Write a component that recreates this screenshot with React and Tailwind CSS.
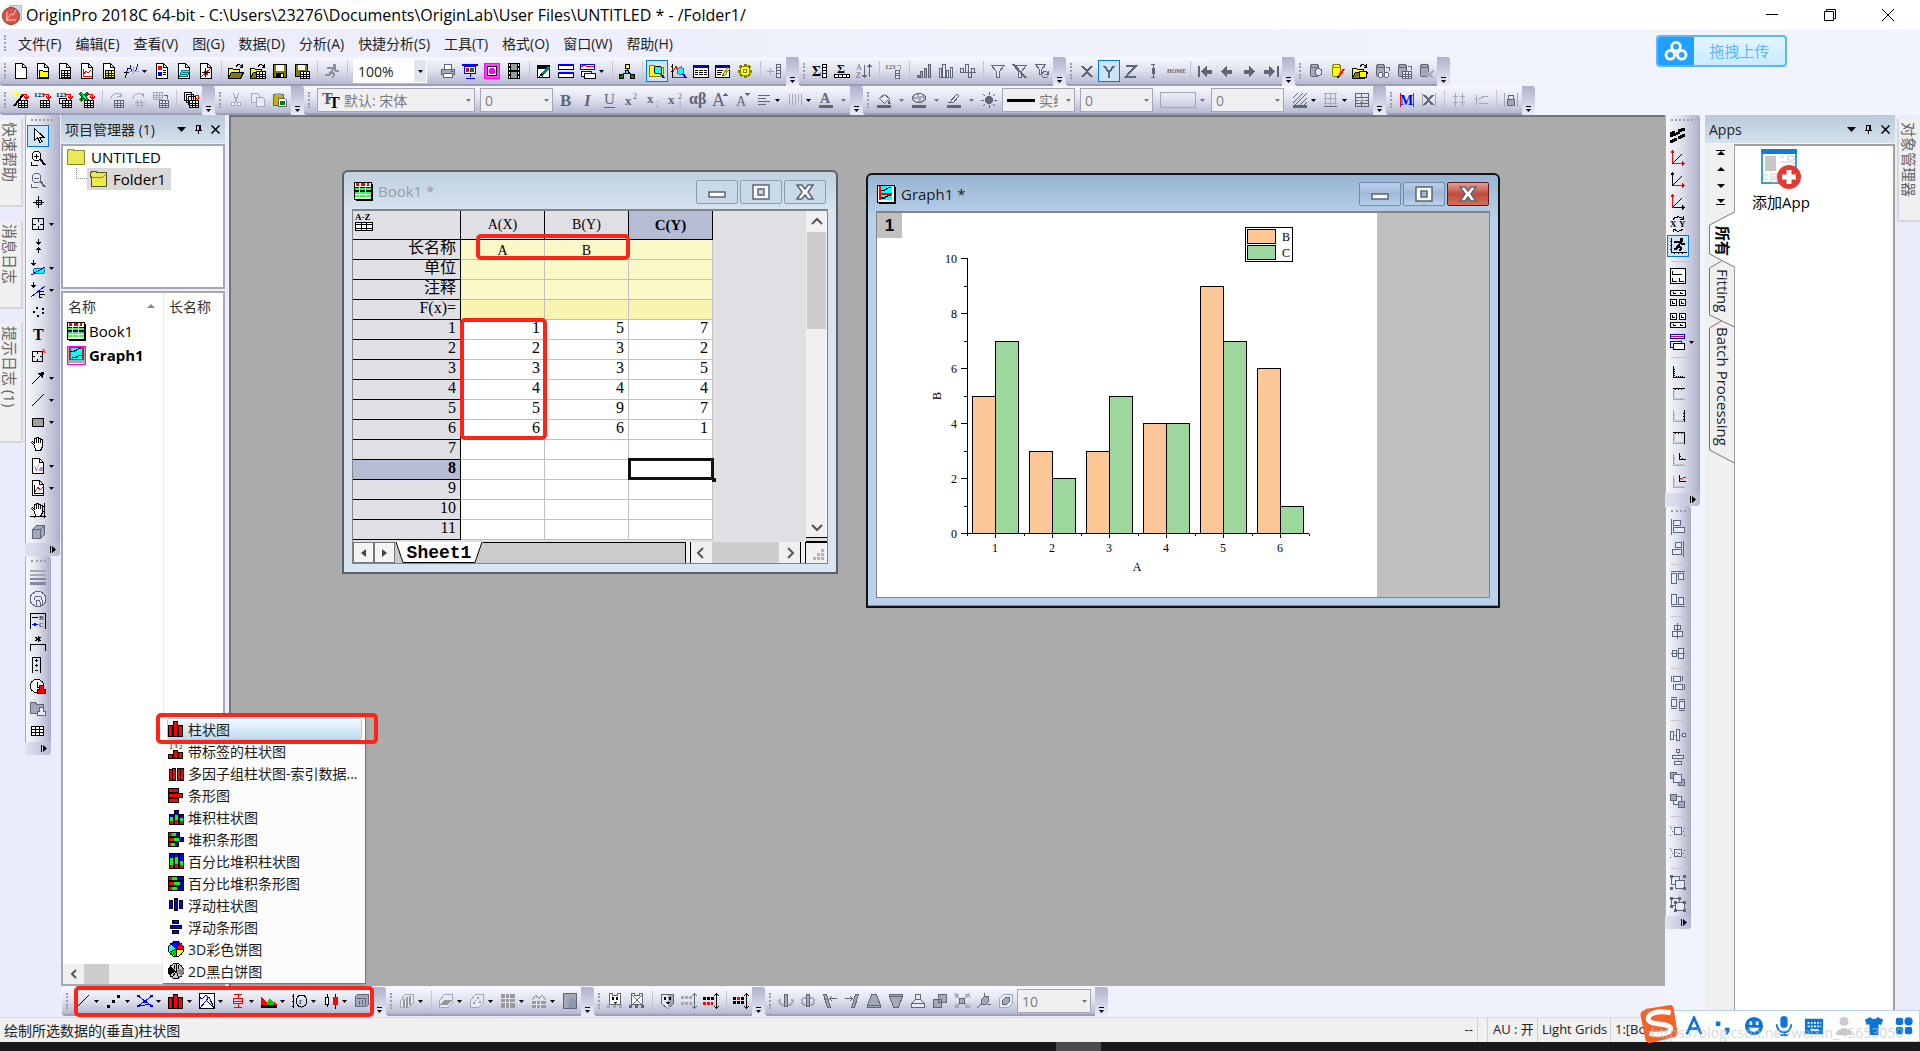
import React from "react";

/* ---------- drawing helpers for the 16x16 tool icons ---------- */
const K = "#000", G = "#5f6675", L = "#a3a9b8", W = "#fff", Y = "#ff0", O = "#808000", R = "#f00", B = "#00f", C = "#0ff", N = "#008000", P = "#e4eafa";
const s = (d, c = K, w = 1) => ({ d, stroke: c, fill: "none", strokeWidth: w });
const f = (d, c = K) => ({ d, fill: c });
const b = (d, c = W, k = K) => ({ d, fill: c, stroke: k });
const t = (x, y, txt, size, c = K, weight = 400) => ({ txt, x, y, size, c, weight });
const r = (x, y, w, h) => `M${x} ${y}h${w}v${h}h-${w}z`;
const o = (x, y, w, h) => `M${x + 0.5} ${y + 0.5}h${w - 1}v${h - 1}h-${w - 1}z`;
const rs = (...list) => list.map((a) => r(...a)).join("");
const os = (...list) => list.map((a) => o(...a)).join("");

const page = [b("M2.5.5h7l4 4v11h-11z"), s("M9.5.5v4h4")];
const grid = (x, y, c = W, k = K) => [b(o(x, y, 10, 8), c, k), s(`M${x} ${y + 3}.5h10M${x} ${y + 5}.5h10M${x + 3}.5 ${y}v8M${x + 6}.5 ${y}v8`, k)];
const folder = [b("M.5 5.5h4l1 1h6v3h4l-3 6h-12z", O), b("M.5 5.5h4l1 1h6v3h-8l-3 5z", Y), s("M8 3.5c2-3 4-2 6 0M14.5 1v3h-3")];
const cyl = (c, k) => [b("M2.5 3.5c0-3 8-3 8 0v8c0 3-8 3-8 0z", c, k), s("M2.5 3.5c0 2 8 2 8 0", k)];
const import1 = (top, c = K, a = R) => [...top, ...grid(5, 8, W, c), s("M8 2.5h5.500v4M11 4.500l2.500 2.500 2.500-2.500", a)];
const axes = (a, c) => [s("M2.500 1v12.500M.500 3.500l2-2.500 2 2.500", a), s("M2.500 13.500h12M12 11.500l2.500 2-2.500 2", c), s("M3 13L12 4", K)];
const cube = (k = G, c = L) => [b("M2.500 5.500l4-4h8v9l-4 4h-8z", c, k), s("M2.500 5.500h8v9M10.500 5.500l4-4", k)];
const tick = "M3.500 2v11.500h11M4 5.500h1M4 7.500h1M4 9.500h1M4 11.500h1M6.500 13v-1M8.500 13v-1M10.500 13v-1M12.500 13v-1";
const runner = (c) => [f("M9 1h3v3h-3z", c), s("M3 5.500l3-1 4 .5-3 4 3 2-1 4M7 9l-2 3h-4M10 5l2 3h3", c, 2)];
const hand = [b("M4.500 9.500l-3-3 1-1 2 1.500v-5h2v-1h2v1h2v1.500h2v7l-2 4h-5z"), s("M6.500 2v5M8.500 2v5M10.500 3v4")];

const ICONS = {
  new: page,
  "new folder": [...page, b("M4.500 7.500h3l1 1h5v6h-9z", Y)],
  "new workbook": [...page, ...grid(4, 7)],
  "new graph": [...page, s("M4.500 6v7.500h8", R), s("M5 11l2-3 2 2 3-3", R)],
  "new matrix": [...page, ...grid(4, 7, Y)],
  "new function": [s("M7 5h-2l-3 10M1 9.500h5"), s("M7 2c2 10 5 10 8-1", B), s("M6 8.500h10M10.500 3v8", L)],
  "new layout": [...page, f(rs([4, 3, 4, 4], [4, 9, 4, 4]), R), f(r(4, 9, 4, 4), B), s("M9 7.500h3M9 9.500h3M9 11.500h3")],
  "new notes": [...page, b("M5.500 7.500h8l-2 6h-8z", C, "#008080"), s("M6 9.500h6M5 11.500h6", "#008080")],
  "new excel": [...page, s("M3 14L13 5", R), f(r(6, 8, 4, 4), R), s("M7.500 5v9M4 9.500h8")],
  open: folder,
  "open template": [...folder.slice(0, 2), ...grid(6, 8), s("M8 3.500c2-3 4-2 6 0M14.500 1v3h-3")],
  save: [b(o(1, 1, 14, 14), O), f(r(4, 2, 8, 6), W), f(r(4, 10, 8, 4)), f(r(9, 11, 2, 3), W)],
  "save template": [b(o(1, 1, 13, 13), O), f(r(4, 2, 7, 5), W), ...grid(6, 8)],
  run: runner("#8a90a0"),
  print: [b("M4.500 1.500h7v5h-7z", W, G), b(o(1, 6, 14, 6), L, G), b(o(3, 10, 10, 5), W, G), f(r(11, 8, 2, 1), N)],
  present: [f(r(0, 1, 16, 2), B), b(o(2, 3, 12, 8), W, B), f(r(4, 5, 3, 4), R), f(r(8, 5, 4, 4), N), s("M8.500 11v3M4 15.500h9", B)],
  slide: [b(o(0, 0, 16, 16), "#ff40ff", "#f0f"), b(o(3, 3, 10, 10)), f("M5 8a3 3 0 1 0 6 0a3 3 0 1 0-6 0", "#f0f")],
  film: [f(r(2, 0, 12, 16)), f(rs([5, 1, 6, 6], [5, 9, 6, 6]), "#999"), f(rs([3, 1, 1, 2], [3, 5, 1, 2], [3, 9, 1, 2], [3, 13, 1, 2], [12, 1, 1, 2], [12, 5, 1, 2], [12, 9, 1, 2], [12, 13, 1, 2]), W)],
  edit: [b(o(1, 2, 13, 13)), s("M1 4.500h13", K, 3), s("M5 13l8-9", "#008080", 3), f("M3 14l2-4 2 2z")],
  tile: [b(o(0, 1, 16, 6)), f(r(0, 1, 16, 2), B), b(o(0, 9, 16, 6)), f(r(0, 9, 16, 2), B)],
  cascade: [b(o(0, 1, 15, 6), W, B), s("M1 4l3-2 4 2 3-1 3 1", R), b(o(1, 8, 11, 6), W, B), b(o(4, 10, 12, 6)), f(r(4, 10, 12, 1), B)],
  tree: [s("M8 5v3M3.500 12L8 8l5 4"), b(o(6, 1, 5, 5), Y), b(o(0, 11, 5, 5), N), b(o(11, 11, 5, 5), N), b(o(6, 7, 4, 4), C)],
  explorer: [b("M.500 2.500h5l1 2h8v9h-14z", Y, O), b("M5 7a4 4 0 1 0 8 0a4 4 0 1 0-8 0", C, K), s("M11 10l4 5", B, 2)],
  "find graph": [s("M1.500 1v13.500h14M2 9l3-6 2 5 4-5", R), s("M1.500 1v14M0 3.500h2M0 8.500h2"), b("M6 8a3 3 0 1 0 7 0a3 3 0 1 0-7 0", C, G), s("M12 11l3 4", B, 2)],
  results: [b(o(0, 2, 16, 13)), f(r(0, 2, 16, 3), "#00a"), s("M2 7.500h12M2 9.500h12M2 11.500h12"), s("M5.500 6v8M10.500 6v8", W)],
  script: [b(o(0, 2, 15, 13)), f(r(0, 2, 15, 3), "#00a"), s("M2 7.500h6M2 9.500h5M2 11.500h4"), s("M8 13l6-8", O, 3), s("M9 12l5-7", Y, 1)],
  gear: [s("M8 1v14M1 8h14M3 3l10 10M13 3L3 13", O, 3), b("M3 8a5 5 0 1 0 10 0a5 5 0 1 0-10 0", Y, O), b("M6 8a2 2 0 1 0 4 0a2 2 0 1 0-4 0", W, O)],
  "add column": [s("M0 8.500h7M3.500 5v7", L), b(o(9, 1, 5, 14), P, G), s("M9 4.500h5M9 7.500h5M9 10.500h5", G)],
  "column stats": [t(0, 13, "Σ", 14, K, 700), b(o(10, 1, 5, 14)), s("M10 4.500h5M10 7.500h5M10 10.500h5")],
  "row stats": [t(3, 10, "Σ", 12, K, 700), b(o(0, 11, 16, 4)), s("M4.500 11v4M8.500 11v4M12.500 11v4")],
  sort: [t(0, 7, "A", 8, G), t(0, 15, "Z", 8, G), s("M8.500 2v12M6.500 12l2 2 2-2M13.500 14V2M11.500 4l2-2 2 2", G)],
  "set values": [t(-1, 6, "123", 7, G, 700), s("M11 2.500h3v4", L), b(o(9, 7, 5, 9), P, G), s("M9 10.500h5M9 12.500h5", G)],
  ascending: [b(os([1, 12, 3, 3], [4, 8, 3, 7], [8, 5, 3, 10], [12, 1, 3, 14]), L, G)],
  columns: [b(os([1, 5, 3, 10], [4, 1, 4, 14], [8, 7, 3, 8], [12, 4, 3, 11]), P, G)],
  normal: [s("M.500 10V5.500h3V10M5.500 10V1.500h3V14.500h3V5.500h3V9M0 9.500h16", G)],
  filter: [b("M1.500 2.500h13l-5 6v6h-3v-6z", P, G), f("M8 8l5-5h1z", G)],
  "filter off": [b("M1.500 2.500h13l-5 6v6h-3v-6z", P, G), s("M1 1l13 14", G, 2)],
  "filter redo": [b("M1.500 1.500h10l-4 5v5h-2v-5z", P, G), s("M8 10.500c2-3 5-3 6 0M14 8v3h-3M14 13c-2 3-5 2-6-1", G)],
  X: [s("M3 3l10 11M13 3L3 14", G, 2)],
  Y: [s("M3 3l5 6 5-6M8 9v6", G, 2)],
  Z: [s("M3 3h10L3 13.500h10", G, 2)],
  error: [s("M6 1.500h4M6 14.500h4M8.500 2v12", G), f(r(7, 5, 3, 6), G)],
  home: [t(0, 10, "HOME", 6, G, 700)],
  first: [s("M1.500 3v11", G, 2), f("M4 8.500L10 3v3.500h5v4h-5V14z", G)],
  previous: [f("M2 8.500L8 3v3.500h5v4H8V14z", G)],
  next: [f("M14 8.500L8 3v3.500H3v4h5V14z", G)],
  last: [f("M12 8.500L6 3v3.500H1v4h5V14z", G), s("M14.500 3v11", G, 2)],
  "db search": [...cyl(L, G), b("M7 9a3 3 0 1 0 7 0a3 3 0 1 0-7 0", P, G)],
  "db edit": [...cyl(Y, O), s("M8 14l6-8", R, 2), f(r(7, 13, 2, 2))],
  "db open": [...folder.slice(0, 2), b("M7.500 9.500c0-2 7-2 7 0v4c0 2-7 2-7 0z", Y), s("M8 3.500c2-3 4-2 6 0M14.500 1v3h-3")],
  "db preview": [...cyl(L, G), s("M12 4h3v4", G), b("M4 12a2 2 0 1 0 5 0a2 2 0 1 0-5 0M10 12a2 2 0 1 0 5 0a2 2 0 1 0-5 0", W, G)],
  "db import": [...cyl(L, G), s("M12 3h3v4", G), ...grid(6, 8, P, G)],
  "db remove": [...cyl(L, G), s("M8 8l7 7M15 8l-7 7", L, 2)],
  wizard: import1([s("M1 14L10 3", K, 2), s("M0 2l4 2M3 0v4M7 0L5 3", Y)]),
  "import single": import1([t(-1, 5, "123", 7, K, 700)]),
  "import multiple": import1([t(-1, 5, "123", 7, K, 700), b(o(2, 6, 8, 6))]),
  "import excel": import1([s("M1 1l8 8M9 1L1 9", N, 3), s("M2 1l7 8", C)]),
  reimport: [...grid(5, 8, P, G), s("M2 6.500c0-5 8-6 10-3M12 1v4M8 4.500h4", L, 1)],
  resample: [s("M4 10.500h10M4 13.500h10M6.500 8v8M10.500 8v8M2 6.500c0-5 8-6 10-3M12 1v4", L)],
  transfer: [...grid(0, 0, P, L), ...grid(6, 8, P, G), s("M11 3h3v4", G)],
  batch: [b(os([1, 0, 8, 9], [3, 2, 8, 9], [5, 4, 8, 9])), ...grid(6, 8), s("M12 3h3v4M13 6l2 2", R)],
  cut: [s("M5 1l4 9M11 1L7 10", L), b("M3 12a2 2 0 1 0 4 0a2 2 0 1 0-4 0M9 12a2 2 0 1 0 4 0a2 2 0 1 0-4 0", W, L)],
  copy: [b("M1.500 1.500h6l2 2v7h-8z", P, L), b("M6.500 5.500h6l2 2v7h-8z", P, L)],
  paste: [b(o(1, 2, 11, 12), "#c8b400", G), f(r(4, 1, 5, 3), L), b("M6.500 6.500h6l2 2v6h-8z", W, G), f(r(8, 9, 5, 4), N)],
  bold: [t(2, 14, "B", 17, G, 700)],
  italic: [{ ...t(4, 14, "I", 17, G, 700), italic: true }],
  underline: [t(2, 12, "U", 15, G), s("M2 15.500h11", G)],
  superscript: [t(1, 13, "x", 13, G, 700), t(9, 7, "2", 8, G)],
  subscript: [t(1, 11, "x", 13, G, 700), t(9, 15, "2", 8, L)],
  "super subscript": [t(0, 12, "x", 13, G, 700), t(10, 7, "2", 8, G), t(10, 15, "1", 8, L)],
  greek: [t(-1, 12, "αβ", 16, G, 700)],
  "increase font": [t(0, 14, "A", 18, G), f("M11 4l2.500-3L16 4z", G)],
  "decrease font": [t(2, 14, "A", 14, G), f("M11 1h5l-2.500 3z", G)],
  align: [s("M2 3.500h12M2 6.500h8M2 9.500h12M2 12.500h8", G)],
  vertical: [s("M2.500 2v11M5.500 2v11M8.500 2v11M11.500 2v8M14.500 2v11", L)],
  "font color": [t(2, 11, "A", 14, G, 700), f(r(1, 13, 14, 3), G)],
  fill: [b("M3.500 6.500l5-4 5 4-5 5z", P, G), f("M13 7l2 5h-3z", G), f(r(1, 13, 14, 3), G)],
  palette: [b("M1.500 6c0-6 13-6 13 0s-13 6-13 0", L, G), f(rs([4, 3, 2, 2], [8, 2, 3, 2], [10, 6, 2, 2], [4, 7, 3, 2]), P), f(r(1, 13, 14, 3), G)],
  "line color": [b("M4 10l7-8 2 2-6 7z", P, G), s("M2 10.500h3", G), f(r(1, 13, 14, 3), G)],
  light: [f("M4 8a4 4 0 1 0 8 0a4 4 0 1 0-8 0", G), s("M8 0v3M8 13v3M0 8h3M13 8h3M2 2l2 2M14 2l-2 2M2 14l2-2M14 14l-2-2", G)],
  hatch: [s("M1 6l5-5M1 11L11 1M3 13L15 1M8 13l7-7M12 13l3-3", G), f(r(1, 13, 14, 3), G)],
  borders: [s("M1 1.500h13M1 6.500h13M1 11.500h13M2.500 1v12M7.500 1v12M12.500 1v12", L), s("M1 14.500h13", G)],
  merge: [s(os([1, 1, 14, 14]) + "M1 5.500h14M1 11.500h14M7.500 1v4M7.500 12v3M2 8.500h3M11 8.500h3", G), t(6, 11, "a", 8, G)],
  mask: [s("M1.500 1v14M14.500 1v14", R), t(1, 13, "M", 14, B, 700)],
  unmask: [s("M1.500 1v14M14.500 1v14", L), s("M3 3l9 10M12 3L3 13", G, 2)],
  "move points": [s("M4.500 1v14M11.500 1v14M2 4.500h5M2 10.500h5M9 4.500h5M9 10.500h5", L)],
  "remove points": [s("M3.500 3v10M1 6l3 3 3-3M7 7l4-3 4 1M6 11h9", L)],
  lock: [s("M1.500 1v14M14.500 1v14", L), b(o(4, 7, 8, 7), L, G), s("M5.500 7V4.500c0-2 5-2 5 0V7", G)],

  pointer: [b("M4.500.500v12l3-3 2.500 5 2-1-2.500-4.500h4z")],
  "zoom in": [b("M2 6a4.500 4.500 0 1 0 9 0a4.500 4.500 0 1 0-9 0"), s("M4 6h5M6.500 3.500v5"), s("M10 9l5 6", K, 2), s("M1.500 12v3h6")],
  "zoom out": [b("M2 6a4.500 4.500 0 1 0 9 0a4.500 4.500 0 1 0-9 0", P, G), s("M4 6h5", G), s("M10 9l5 6", G, 2), s("M1.500 12v3h6", G)],
  reader: [s("M8.500 2v12M3 8.500h11" + o(6, 6, 6, 5))],
  "data reader": [s(o(2, 2, 12, 12) + "M8 2v4M8 10v4M2 8h4M10 8h4")],
  "data selector": [s("M8.500 1v5M8.500 10v5"), f("M5 4h7l-3.500 3zM5 12h7l-3.500-3z")],
  region: [s("M3.500 0v5"), f("M0 3h7L3.500 6z"), b("M3 11c0-4 12-4 12 0s-12 4-12 0", C, "#008080"), s("M1 15L15 7", B)],
  "mask points": [s("M3.500 0v5"), f("M0 3h7L3.500 6z"), s("M1 15L15 4", B), s("M8 9.500h6M9.500 9v6M10 12.500h5M9 15.500h3")],
  "draw data": [f(rs([6, 3, 2, 2], [3, 7, 2, 2], [12, 4, 2, 2], [12, 8, 2, 2], [7, 11, 2, 2]))],
  text: [t(3, 14, "T", 16, K, 700)],
  annotation: [s(o(2, 3, 11, 11) + "M7.500 3v3M7.500 11v3M2 8.500h3M10 8.500h3"), t(11, 5, "A", 7, R, 700)],
  arrow: [s("M2 14L12 4"), f("M7 3l7-1-1 7z")],
  line: [s("M2 14L14 2")],
  rectangle: [b(o(2, 4, 12, 9), "#a0a0a0")],
  pan: hand,
  equation: [...page, t(4, 13, "√a", 9, "#800080")],
  "insert graph": [...page, s("M4.500 5v8.500h9M6.500 13v1M8.500 13v1"), s("M5 12l3-5 2 3 3-3", R)],
  rescale: [...hand.slice(0, 2), s("M0 14.500h16M14.500 1v15M4.500 14v2M12 4.500h3M12 9.500h3")],
  "3d rotate": cube(),
  lines: [f(rs([0, 1, 16, 2], [0, 5, 16, 2]), L), f(rs([0, 9, 16, 2], [0, 13, 16, 3]), "#8289a0")],
  contour: [b("M0 8a8 7.500 0 1 0 16 0a8 7.500 0 1 0-16 0", P, G), s("M4 9a4 4 0 1 1 8 0v5M6 15v-4a2 2 0 1 1 4 0v4", G)],
  legend: [s("M.500 16V.500h15V16"), s("M2 4.500h6"), t(9, 7, "B", 7), t(9, 14, "C", 7), s("M2 11.500h6", B), f(r(4, 10, 2, 3), B)],
  "x scale": [s("M.500 16v-6.500h15V16M8 1v6M5 2l6 4M11 2L5 6")],
  "color scale": [s("M2.500 16V.500h8V16M5 3.500h3M5 8.500h3M5 13.500h3M6.500 2v3M6.500 7v3")],
  timestamp: [b("M0 7a7 6.500 0 1 0 14 0a7 6.500 0 1 0-14 0"), s("M7 3v5h3"), b("M9.500 6.500h4v4h2v4h-8v-4h2z", R)],
  "project stamp": [b("M.500 1.500h5l1 2h7v9h-13z", L, G), b("M9.500 6.500h4v4h2v4h-8v-4h2z", P, G)],
  table: [b(o(1, 3, 13, 10)), s("M1 6.500h13M1 9.500h13M5.500 3v10M9.500 3v10")],

  layers: [s("M8 3l7-2M4 7l6-3M8 10l7-3M0 8l6-2M0 14l7-3M0 6l5-2", K, 3)],
  "axes both": axes(R, R),
  "axes x": axes(K, R),
  "axes y": axes(R, K),
  "exchange xy": [t(0, 11, "X", 9, K, 700), t(9, 11, "Y", 9, K, 700), s("M3 4c2-4 8-4 10-1M13 0v3h-3M13 13c-3 3-7 3-9 0M3 16v-3h3")],
  "speed mode": [s("M1.500 0v14.500h15M0 3.500h2M0 7.500h2M0 11.500h2M4.500 14v2M8.500 14v2M12.500 14v2"), f("M10 0h3v3h-3z"), s("M4 4.500l3-1 4 .5-3 4 3 2-1 3M8 8l-2 3h-2M11 4l1 2h3", K, 2)],
  "layers one": [b(o(0, 0, 16, 16)), s("M2.500 3v3.500h9M2.500 10v3.500h4M9.500 10v3.500h4")],
  "layers merge": [b(os([0, 0, 16, 6], [0, 9, 7, 7], [9, 9, 7, 7])), s("M3.500 2v1.500h2M10.500 2v1.500h2M2.500 11v2.500h2M11.500 11v2.500h2")],
  "layers extract": [b(os([0, 1, 7, 7], [9, 1, 7, 7], [0, 10, 16, 6])), s("M2.500 3v2.500h2M11.500 3v2.500h2M3.500 12v1.500h2M10.500 12v1.500h2")],
  "layers arrange": [b(o(0, 0, 15, 5), W, B), s("M1 3l3-1 4 1 3-1 3 1", R), b(o(0, 7, 12, 7), W, B), b(o(3, 9, 12, 7))],
  "add bottom left": [s(tick)],
  "add top": [s(tick, L), s("M3 2.500h12M5.500 3v1M8.500 3v1M11.500 3v1")],
  "add right": [s(tick, L), s("M14.500 2v12M13 5.500h1M13 8.500h1M13 11.500h1")],
  "add top right": [s(tick, L), s("M3 2.500h11.500V14M5.500 3v1M8.500 3v1M11.500 3v1")],
  "add inset": [s(tick, L), s("M9.500 1v6.500h6M10 4.500h1M12.500 7V6")],
  "add inset data": [s(tick, L), s("M9.500 1v6.500h6M10 4.500h1"), s("M11 6l3-3 2 1", R)],

  "align left": [s("M1.500 0v16", G), b(os([3, 1, 8, 6], [3, 8, 12, 6]), P, G)],
  "align right": [s("M13.500 0v16", G), b(os([5, 1, 7, 6], [2, 8, 10, 6]), P, G)],
  "align top": [s("M1 .500h14", G), b(os([1, 2, 6, 11], [8, 2, 6, 7]), P, G)],
  "align bottom": [s("M1 13.500h14", G), b(os([1, 1, 6, 11], [8, 4, 6, 8]), P, G)],
  "align center": [b(os([4, 2, 7, 5], [2, 8, 11, 6]), P, G), s("M7.500 0v16", G)],
  "align middle": [b(os([2, 5, 5, 7], [8, 3, 6, 11]), P, G), s("M1 8.500h14", G)],
  "same width": [b(os([3, 1, 8, 6], [5, 9, 8, 6]), P, G), s("M1.500 1v6M12.500 1v5M3.500 9v6M14.500 9v6", G)],
  "same height": [b(os([1, 2, 6, 8], [9, 4, 6, 8]), P, G), s("M1 .500h6M1 11.500h6M9 2.500h6M9 13.500h6", G)],
  "distribute h": [s("M0 8.500h16", L), b(os([0, 4, 4, 9], [6, 2, 4, 12], [12, 6, 4, 4]), P, G)],
  "distribute v": [s("M8 0v16", L), b(os([6, 0, 4, 4], [2, 6, 12, 4], [4, 12, 8, 4]), P, G)],
  front: [b(os([0, 1, 7, 7], [8, 8, 7, 7]), L, G), b(o(3, 3, 9, 9), P, G)],
  back: [b(o(3, 3, 9, 9), P, G), b(os([0, 1, 7, 7], [8, 8, 7, 7]), L, G)],
  "to front": [b(o(4, 4, 8, 8), P, G), f(rs([0, 3, 1, 1], [1, 5, 1, 1], [2, 8, 1, 1], [0, 12, 1, 1], [14, 5, 1, 1], [13, 8, 1, 1], [14, 12, 1, 1]), G)],
  "to back": [b(o(4, 4, 8, 8), P, G), f(rs([0, 3, 1, 1], [1, 5, 1, 1], [2, 8, 1, 1], [0, 12, 1, 1], [14, 5, 1, 1], [13, 8, 1, 1], [14, 12, 1, 1], [6, 7, 1, 1], [8, 8, 2, 1], [7, 10, 1, 1]), G)],
  group: [b(o(1, 1, 9, 9), P, G), b(o(5, 5, 10, 9), P, G), f(rs([0, 0, 3, 3], [13, 0, 3, 3], [0, 12, 3, 3], [13, 12, 3, 3]), G)],
  ungroup: [b(o(1, 1, 9, 8), P, G), b(o(5, 5, 10, 9), P, G), f(rs([0, 0, 3, 3], [8, 0, 3, 3], [0, 8, 3, 3], [4, 4, 3, 3], [13, 4, 3, 3], [4, 12, 3, 3], [13, 12, 3, 3]), G)],

  "plot line": [s("M2 14L14 2")],
  "plot scatter": [f(rs([1, 12, 3, 3], [6, 7, 3, 3], [11, 2, 3, 3]))],
  "plot line symbol": [s("M1 13L15 3M1 3l7 5 7 5M3 13l10-2", B), f(rs([0, 2, 3, 2], [0, 12, 3, 2], [6, 7, 3, 3], [13, 2, 3, 2], [13, 12, 3, 2]), B)],
  "plot column": [b(os([0, 4, 5, 12], [5, 1, 5, 15], [10, 4, 5, 12]), R)],
  "plot area": [b(o(0, 0, 16, 16), W), s("M1 15L7 8l3-4 5 11", B), s("M1 4c3 6 6-8 8 2", B), s("M8 8l7 7")],
  "plot box": [s("M4 1.500h8M4 14.500h8M8 2v3M8 11v3M3.500 5.500h9v5h-9zM3 8h10", R)],
  "plot fill": [f("M0 15V4l6 6 4-3 6 4v4z", R), f("M5 11l4-6 4 5v2H6z", "#0c0"), f("M0 15v-3h16v3z")],
  "plot polar": [s("M1.500 1v14M0 3.500h2M0 8.500h2M0 13.500h2"), s("M4 8a5.500 6 0 1 0 11 0a5.500 6 0 1 0-11 0"), t(7, 11, "r", 9)],
  "plot stock": [s("M4 1v13M12.500 1v15"), b(o(2, 4, 4, 8)), b(o(10, 4, 5, 8), R, R)],
  "plot template": [b("M1.500 3.500l2-2h11v10l-2 2h-11z", L, G), s("M3 5.500h8v6M5.500 8v4M8.500 7v5", G)],
  "3d bars": [b("M1.500 7.500l5-6h8v8l-5 5h-8z", P, L), s("M4.500 6v8M7.500 4v10M10.500 3v9", "#999", 2)],
  "3d surface": [b("M1.500 7.500l5-6h8v8l-5 5h-8z", P, L), f("M2 12l4-5h8l-4 5z", "#999")],
  "3d scatter": [b("M1.500 7.500l5-6h8v8l-5 5h-8z", P, L), f(rs([4, 9, 2, 2], [8, 4, 2, 2], [10, 8, 2, 2], [6, 7, 1, 1]), "#999")],
  heatmap: [f(r(1, 1, 14, 14), "#999"), s("M1 5.500h14M1 9.500h14M5.500 1v14M9.500 1v14", P)],
  profile: [f(r(1, 8, 14, 7), "#999"), s("M1 7l4-5 3 4 3-4 4 5", "#999"), s("M1 11.500h14M5.500 8v7M9.500 8v7", P)],
  image: [b(o(1, 0, 14, 16), L, G), f("M8 4l6 3v8H6z", "#8c97b0")],
  "mask range": [b("M2.500.500h3v2h5v-2h3v11h-11z", W, G), f("M5 4h2v3h-2zM9 4h2v3h-2zM6 9h4l-2 2z"), f(rs([0, 12, 3, 3], [6, 12, 3, 3], [12, 12, 3, 3]), L)],
  "unmask range": [b("M2.500.500h3v2h5v-2h3v11h-11z", W, G), s("M2 1l12 12M14 1L2 13", G), f(rs([0, 12, 3, 3], [6, 12, 3, 3], [12, 12, 3, 3]), G)],
  "mask color": [b("M2.500 1.500h12v9l-6 5-6-5z", P, G), f("M9 2h5v8l-5 5z", L), f("M5 4h2v3h-2zM10 4h2v3h-2zM6 9h5l-2 3z", K)],
  "hide masked": [f(rs([0, 3, 3, 3], [4, 3, 3, 3], [8, 3, 3, 3], [0, 9, 3, 3], [4, 9, 3, 3], [8, 9, 3, 3]), L), s("M13.500 1v14M11 3l2.500-2.500L16 3M11 13l2.500 2.500L16 13", G)],
  "swap mask": [f(rs([0, 4, 3, 3], [4, 4, 3, 3], [8, 4, 3, 3])), f(rs([0, 9, 3, 3], [4, 9, 3, 3], [8, 9, 2, 3]), R), s("M13.500 1v14M11 3l2.500-2.500L16 3M11 13l2.500 2.500L16 13")],
  "toggle mask": [f(rs([0, 8, 3, 3], [4, 8, 3, 3], [8, 8, 3, 3], [0, 4, 3, 3], [8, 4, 3, 3])), f(r(4, 4, 3, 3), R), s("M13.500 1v14M11 3l2.500-2.500L16 3M11 13l2.500 2.500L16 13")],
  "rotate ccw": [b(o(6, 1, 4, 13), L, G), s("M2 6c-2 4 1 6 4 6M14 6c2 4-1 6-4 6", L, 2)],
  "rotate cw": [b(o(6, 1, 4, 13), L, G), s("M6 12c-7 0-5-8 0-7M10 12c7 0 5-8 0-7", L, 2)],
  "tilt left": [b("M1.500 1.500h3l4 13h-3z", L, G), s("M8 5.500h7M10 3L8 5.500 10 8", G)],
  "tilt right": [b("M14.500 1.500h-3l-4 13h3z", L, G), s("M8 5.500H1M6 3l2 2.500L6 8", G)],
  "tilt down": [b("M5.500 1.500h5l4 11v2h-13v-2z", L, G), s("M1 12.500h14", G)],
  "tilt up": [b("M5.500 14.500h5l4-11v-2h-13v2z", L, G), s("M1 3.500h14", G)],
  perspective: [b("M5.500 6.500h5l4 4v4h-13v-4z", P, G), s("M1 10.500h14M5.500 6V1.500h5V6", G)],
  orthographic: [b(os([6, 1, 9, 9], [1, 6, 9, 9]), L, G)],
  "fit frame": [s("M1 1l4 4M15 1l-4 4M1 15l4-4M15 15l-4-4", L, 2), b(o(5, 5, 6, 6), L, G), s("M1 5V1.500h4M11 1.500h4V5M15 11v3.500h-4M5 14.500H1V11", L)],
  "reset angle": [b("M5.500 6.500l3-3h4v5l-3 3h-4z", L, G), s("M8 0v4M11 11h4M5 11l-4 4", G)],
  "reset rotation": [b("M1.500 5.500l4-4h9v9l-4 4h-9z", P, L), b("M4.500 7.500l3-3h4v4l-3 3h-4z", L, G)],

  "menu column": [b(os([0, 4, 5, 12], [5, 0, 5, 16], [10, 4, 5, 12]), R)],
  "menu labelled": [t(1, 6, "1", 8), t(6, 5, "3", 7), t(11, 6, "2", 7), b(os([0, 11, 5, 5], [5, 7, 5, 9], [10, 9, 5, 7]), R)],
  "menu grouped": [b(os([1, 4, 4, 12], [4, 3, 4, 13], [9, 3, 4, 13], [12, 3, 4, 13]), R)],
  "menu bar": [b(os([0, 1, 11, 5], [0, 6, 15, 5], [0, 11, 11, 5]), R)],
  "menu stacked column": [b(os([1, 5, 5, 11], [6, 1, 5, 15], [11, 5, 5, 11]), B), f(rs([2, 8, 3, 4], [7, 6, 3, 5], [12, 9, 3, 3]), "#0f0"), f(rs([2, 12, 3, 3], [7, 11, 3, 4], [12, 12, 3, 3]), R)],
  "menu stacked bar": [b(os([0, 1, 12, 5], [0, 6, 16, 5], [0, 11, 11, 5]), B), f(rs([4, 2, 4, 3], [6, 7, 5, 3], [3, 12, 4, 3]), "#0f0"), f(rs([1, 2, 3, 3], [1, 7, 5, 3], [1, 12, 2, 3]), R)],
  "menu percent column": [b(os([1, 0, 5, 16], [6, 0, 5, 16], [11, 0, 5, 16]), B), f(rs([2, 5, 3, 7], [7, 4, 3, 7], [12, 8, 3, 4]), "#0f0"), f(rs([2, 12, 3, 3], [7, 11, 3, 4], [12, 12, 3, 3]), R)],
  "menu percent bar": [b(os([0, 1, 16, 5], [0, 6, 16, 5], [0, 11, 16, 5]), B), f(rs([4, 2, 5, 3], [6, 7, 6, 3], [4, 12, 5, 3]), "#0f0"), f(rs([1, 2, 3, 3], [1, 7, 5, 3], [1, 12, 3, 3]), R)],
  "menu floating column": [b(os([1, 3, 4, 9], [6, 1, 4, 13], [11, 3, 4, 9]), B)],
  "menu floating bar": [b(os([4, 1, 7, 4], [2, 6, 12, 4], [4, 11, 7, 4]), B)],
  "menu 3d pie": [b("M.500 8a7.500 7.500 0 1 0 15 0a7.500 7.500 0 1 0-15 0", Y), f("M8 8L3 3a7 7 0 0 1 9-1z", B), f("M8 8L3 3a7 7 0 0 0-1 8z", C), f("M8 8l4-6a7 7 0 0 1 3 6z", R), f("M8 8l-6 3a7 7 0 0 0 6 4z", "#0c0"), s("M8 8L3 3M8 8l4-6M8 8l-6 3M8 8v7M8 8h7")],
  "menu 2d pie": [b("M.500 8a7.500 7.500 0 1 0 15 0a7.500 7.500 0 1 0-15 0", "#ccc"), f("M8 8L2 3a7 7 0 0 0 0 9z"), f("M8 8l6 5a7 7 0 0 0 1-8z", "#888"), s("M8 8l-4 7M8 8l3 7M8 1v7M6 2v4M10 2v4")],

  workbook: [f(r(2, 2, 14, 14)), b(o(0, 0, 15, 15)), f(rs([2, 1, 2, 2], [6, 1, 3, 2], [11, 1, 2, 2]), R), f(rs([1, 5, 13, 2], [1, 8, 13, 2], [1, 11, 13, 2]), "#3f3"), s("M1 4.500h13M1 7.500h13", "#008"), s("M4.500 1v13M9.500 1v13", "#ddd")],
  graph: [f(r(2, 2, 14, 14)), b(o(0, 0, 15, 15)), f(r(2, 1, 11, 12), C), s("M3 5l4-1 3-2h2M3 11h3l3-2h3"), s("M2 7.500h11M2.500 1v12", R)],
  "graph item": [b(o(0, 0, 16, 16), "#aaa", "#f0f"), b(o(2, 1, 12, 11), C, "#933"), s("M3 5l4-1 3-2h2M4 10h3l3-2h3"), s("M2 14.500h12", W)],
  "folder": [b("M.500 2.500l1-1h4l1 1h9v12h-15z", "#e8e85a", "#8a8a30"), f(rs([3, 6, 1, 1], [8, 6, 1, 1], [12, 6, 1, 1], [5, 9, 1, 1], [10, 9, 1, 1]), Y)],
  "folder open": [b("M1.500 2.500l1-1h4l1 1h8v12h-13z", "#e8e85a", "#55551f"), s("M1 6.500h11l3-3", "#8a8a30"), f(rs([4, 9, 1, 1], [8, 9, 1, 1], [6, 12, 1, 1], [11, 12, 1, 1]), Y)],
  "corner": [t(0, 6, "A-Z", 8, K, 700), b(o(0, 8, 16, 8)), s("M0 10.500h16M5.500 8v8M10.500 8v8M0 13.500h16", K)],
};

function Icon({ name, className = "h-4 w-4" }) {
  return (
    <svg viewBox="0 0 16 16" className={`shrink-0 overflow-visible ${className}`} aria-hidden="true">
      {ICONS[name].map((p, i) =>
        p.txt ? (
          <text key={i} x={p.x} y={p.y} fontSize={p.size} fill={p.c} fontWeight={p.weight} fontStyle={p.italic ? "italic" : "normal"} fontFamily="Liberation Serif, serif">{p.txt}</text>
        ) : (
          <path key={i} d={p.d} fill={p.fill} stroke={p.stroke} strokeWidth={p.strokeWidth || 1} shapeRendering="crispEdges" />
        )
      )}
    </svg>
  );
}

/* ---------- toolbar parts ---------- */
const Caret = ({ muted }) => (
  <svg viewBox="0 0 5 3" className={`h-[3px] w-[5px] ${muted ? "fill-[#777]" : "fill-black"}`}><path d="M0 0h5L2.500 3z" /></svg>
);

function Tool({ spec }) {
  if (typeof spec !== "string") return spec;
  if (spec === "|") return <span className="flex w-2 shrink-0 justify-center"><i className="h-5 w-px bg-[#c3c4cf]" /></span>;
  if (spec === "-") return <span className="flex h-2 items-center px-1"><i className="h-px w-5 bg-[#c3c3c8]" /></span>;
  const on = spec[0] === "*";
  const wide = spec.endsWith(">>");
  const drop = spec.endsWith(">");
  const name = spec.replace("*", "").replace(/>+$/, "");
  return (
    <span className="flex shrink-0 items-center">
      <button aria-label={name} aria-pressed={on} className={`flex h-[22px] w-[22px] items-center justify-center ${on ? "border border-[#0078d7] bg-[#cde4f7]" : ""}`}>
        <Icon name={name} />
      </button>
      {drop && (
        <button aria-label={`${name} options`} className={`flex h-[22px] items-center ${wide ? "w-[13px] justify-center" : "w-[9px]"}`}><Caret muted={wide} /></button>
      )}
    </span>
  );
}

function Bar({ items, children }) {
  return (
    <div className="relative flex h-[29px] shrink-0">
      <div className="flex items-center rounded-l-[3px] border-b-2 border-[#9c9db6] bg-gradient-to-b from-[#f8f9fe] via-[#dfe1ee] to-[#b6b8d0] pt-px">
        <span className="flex w-[10px] shrink-0 justify-center"><i className="h-4 border-l-2 border-dotted border-[#9a9cab]" /></span>
        {items.map((it, i) => <Tool key={i} spec={it} />)}
      </div>
      <button aria-label="toolbar options" className="flex w-[13px] shrink-0 flex-col items-center justify-end gap-[2px] rounded-r-[3px] bg-gradient-to-b from-[#b0b1cc] to-[#ecedf9] pb-[3px]">
        <i className="h-px w-[5px] bg-black" /><Caret />
      </button>
      {children}
    </div>
  );
}

function Column({ items, wide }) {
  return (
    <div className={`flex flex-col ${wide ? "w-[35px]" : "w-[26px]"}`}>
      <div className="rounded-t-[3px] border-x border-[#a9abc0] bg-gradient-to-r from-[#f8fafe] via-[#dcdeea] to-[#b0b2ca] pl-px">
        <span className={`ml-1 flex h-[10px] items-center ${wide ? "w-[22px]" : "w-[15px]"}`}><i className="w-full border-t-2 border-dotted border-[#9a9cab]" /></span>
        {items.map((it, i) => <Tool key={i} spec={it} />)}
      </div>
      <button aria-label="toolbar options" className="flex h-[13px] items-center justify-end rounded-b-[3px] bg-gradient-to-r from-[#e2e4f5] to-[#b8bad2] pr-1">
        <svg viewBox="0 0 6 7" className="h-[7px] w-[6px]"><path d="M0 0h1v7H0zM2 0l4 3.500L2 7z" /></svg>
      </button>
    </div>
  );
}

function Combo({ label, value, className, enabled, icon, line }) {
  return (
    <label className={`relative flex h-[24px] shrink-0 items-center border ${enabled ? "border-white bg-white text-[#222]" : "border-[#a4a6b5] bg-[#f0f0f2] text-[#7c7c7c]"} ${className}`}>
      {icon && (
        <svg viewBox="0 0 18 18" className="ml-1 h-[18px] w-[18px] shrink-0" fontFamily="Liberation Serif, serif" fontWeight="700">
          <text x="0" y="13" fontSize="16" fill="#555">T</text><text x="7" y="17" fontSize="16">T</text>
        </svg>
      )}
      {line && <i className="ml-1 h-[3px] w-7 shrink-0 bg-black" />}
      <select aria-label={label} defaultValue={value} className="h-full w-full min-w-0 appearance-none bg-transparent px-1 text-[14px] outline-none">
        <option>{value}</option>
      </select>
      <span className={`pointer-events-none flex h-full w-3 shrink-0 items-center justify-center ${enabled ? "bg-[#e2e4ee]" : ""}`}><Caret muted={!enabled} /></span>
    </label>
  );
}

const ROW1 = [
  ["new", "new folder", "new workbook", "new graph", "new matrix", "new function>", "new layout", "new notes", "new excel", "|", "open", "open template", "save", "save template", "|", "run", "|",
    <Combo key="z" label="缩放" value="100%" enabled className="ml-[2px] mr-[10px] w-[74px]" />,
    "print", "present", "slide", "film", "|", "edit", "tile", "cascade>", "|", "tree", "|", "*explorer", "find graph", "results", "script", "gear", "|", "add column"],
  ["column stats", "row stats", "sort", "|", "set values", "|", "ascending", "columns", "normal", "|", "filter", "filter off", "filter redo"],
  ["X", "*Y", "Z", "error", "home", "|", "first", "previous", "next", "last"],
  ["db search", "db edit", "db open", "db preview", "db import", "db remove"],
];

const ROW2 = [
  ["wizard", "import single", "import multiple", "import excel", "|", "reimport", "resample", "transfer", "|", "batch"],
  ["cut", "copy", "paste"],
  [<Combo key="f" label="字体" value="默认: 宋体" icon className="ml-[3px] mr-[5px] w-[158px]" />,
    <Combo key="s" label="字号" value="0" className="mr-[2px] w-[73px]" />,
    "bold", "italic", "underline", "superscript", "subscript", "super subscript", "greek", "increase font", "decrease font", "align>", "vertical>", "font color>>"],
  ["fill>>", "palette>>", "line color>>", "light",
    <Combo key="l" label="线型" value="实线" line className="mx-[2px] w-[73px]" />,
    <Combo key="w" label="线宽" value="0" className="ml-[3px] w-[73px]" />,
    <button key="p" aria-label="图案" className="ml-[7px] flex shrink-0 items-center"><i className="h-4 w-9 border border-[#a4a6b5]" /><span className="flex w-[13px] justify-center"><Caret muted /></span></button>,
    <Combo key="g" label="间距" value="0" className="ml-[2px] mr-[5px] w-[73px]" />,
    "hatch>", "borders>", "merge"],
  ["mask", "unmask", "|", "move points", "remove points", "|", "lock"],
];

const LEFT1 = ["*pointer", "zoom in", "zoom out", "reader", "data reader>", "data selector", "region>", "mask points>", "draw data", "text", "annotation", "arrow>", "line>", "rectangle>", "pan", "equation>", "insert graph>", "rescale", "3d rotate"];
const LEFT2 = ["lines", "contour", "legend", "x scale", "color scale", "timestamp", "project stamp", "table"];
const RIGHT1 = ["layers", "axes both", "axes x", "axes y", "exchange xy", "*speed mode", "-", "layers one", "layers merge", "layers extract", "layers arrange>", "-", "add bottom left", "add top", "add right", "add top right", "add inset", "add inset data"];
const RIGHT2 = ["align left", "align right", "-", "align top", "align bottom", "-", "align center", "align middle", "-", "same width", "same height", "-", "distribute h", "distribute v", "front", "back", "-", "to front", "to back", "-", "group", "ungroup"];

const PLOTS = ["plot line>", "plot scatter>", "plot line symbol>", "plot column>", "plot area>", "plot box>", "plot fill>", "plot polar>", "plot stock>", "plot template"];
const BOTTOM = [
  ["3d bars>", "|", "3d surface>", "3d scatter>", "heatmap>", "profile>", "image"],
  ["mask range", "unmask range", "|", "mask color", "hide masked", "swap mask", "|", "toggle mask"],
  ["rotate ccw", "rotate cw", "tilt left", "tilt right", "tilt down", "tilt up", "perspective", "orthographic", "fit frame", "reset angle", "reset rotation",
    <Combo key="a" label="旋转角度" value="10" className="mr-1 w-[74px]" />],
];

const MENUS = ["文件(F)", "编辑(E)", "查看(V)", "图(G)", "数据(D)", "分析(A)", "快捷分析(S)", "工具(T)", "格式(O)", "窗口(W)", "帮助(H)"];

const PLOT_MENU = [
  ["menu column", "柱状图"], ["menu labelled", "带标签的柱状图"], ["menu grouped", "多因子组柱状图-索引数据..."], ["menu bar", "条形图"],
  ["menu stacked column", "堆积柱状图"], ["menu stacked bar", "堆积条形图"], ["menu percent column", "百分比堆积柱状图"], ["menu percent bar", "百分比堆积条形图"],
  ["menu floating column", "浮动柱状图"], ["menu floating bar", "浮动条形图"], ["menu 3d pie", "3D彩色饼图"], ["menu 2d pie", "2D黑白饼图"],
];

const Mark = ({ className }) => <i className={`pointer-events-none absolute rounded-[5px] border-4 border-[#fd2317] ${className}`} />;

/* ---------- top ---------- */
function TitleBar() {
  return (
    <header className="flex h-[29px] shrink-0 items-center bg-white pl-[2px]">
      <svg viewBox="0 0 20 20" className="h-5 w-5">
        <path d="M8 0h12v15H8z" fill="#cfd9f2" stroke="#8da0d0" />
        <ellipse cx="9" cy="11" rx="8.500" ry="8.500" fill="#d85348" stroke="#8c3029" />
        <path d="M5 16V7M4 15h10M5 14l4-5 2 1 3-5" stroke="#f8c9c2" fill="none" />
      </svg>
      <h1 className="ml-1 grow whitespace-nowrap text-[16px] text-black">OriginPro 2018C 64-bit - C:\Users\23276\Documents\OriginLab\User Files\UNTITLED * - /Folder1/</h1>
      <div className="flex items-center gap-[46px] pr-[26px]">
        <button aria-label="最小化"><svg viewBox="0 0 12 12" className="h-3 w-3"><path d="M0 5.500h12" stroke="#000" /></svg></button>
        <button aria-label="还原"><svg viewBox="0 0 12 12" className="h-3 w-3" fill="none" stroke="#000"><path d="M.500 2.500h9v9h-9zM2.500 2.500v-2h9v9h-2" /></svg></button>
        <button aria-label="关闭"><svg viewBox="0 0 12 12" className="h-3 w-3" stroke="#000"><path d="M0 0l12 12M12 0L0 12" /></svg></button>
      </div>
    </header>
  );
}

function MenuBar() {
  return (
    <nav className="relative flex h-[28px] shrink-0 items-center">
      <i className="ml-1 mr-[12px] h-4 border-l-2 border-dotted border-[#9a9cab]" />
      <div className="flex gap-[14px] text-[14px] text-[#222]">
        {MENUS.map((m) => <button key={m}>{m}</button>)}
      </div>
      <button className="absolute right-[133px] top-[6px] z-10 flex h-8 w-[131px] overflow-hidden rounded-[4px] border-2 border-[#5cb8fb] bg-gradient-to-b from-[#e4f5ff] to-[#c9ebff]">
        <span className="flex h-full w-9 items-center justify-center bg-[#22a0ff]">
          <svg viewBox="0 0 24 22" className="h-[21px] w-6" fill="none" stroke="#fff" strokeWidth="3"><circle cx="12" cy="6" r="4.500" /><circle cx="6" cy="14.500" r="4.500" /><circle cx="18" cy="14.500" r="4.500" /></svg>
        </span>
        <span className="flex h-full grow items-center justify-center text-[15px] text-[#5cb8fb]">拖拽上传</span>
      </button>
    </nav>
  );
}

/* ---------- left dock ---------- */
function PanelHead({ title }) {
  return (
    <div className="flex h-[28px] shrink-0 items-center justify-between bg-gradient-to-b from-[#b9cad9] to-[#d5e2ee] pl-1 pr-[5px] text-[14px] text-[#222]">
      <h2>{title}</h2>
      <div className="flex items-center gap-2">
        <button aria-label="面板菜单"><svg viewBox="0 0 9 5" className="h-[5px] w-[9px]"><path d="M0 0h9L4.500 5z" /></svg></button>
        <button aria-label="固定"><svg viewBox="0 0 9 9" className="h-[9px] w-[9px]" fill="none" stroke="#000"><path d="M2.500 5V.500h4V5M5.500 1v4M1 5.500h7M4.500 6v3" shapeRendering="crispEdges" /></svg></button>
        <button aria-label="关闭面板"><svg viewBox="0 0 9 9" className="h-[9px] w-[9px]" stroke="#000" strokeWidth="1.500"><path d="M.500.500l8 8M8.500.500l-8 8" /></svg></button>
      </div>
    </div>
  );
}

function SideTab({ children, className }) {
  return (
    <button className={`border-[#d8d8dc] bg-[#f0f0f0] text-left text-[15px] leading-[22px] text-[#666] [text-orientation:sideways] [writing-mode:vertical-rl] ${className}`}>{children}</button>
  );
}

function PlotMenu() {
  return (
    <div className="absolute bottom-0 left-[100px] z-20 w-[203px] border-b border-r border-[#777] bg-[#fcfcfc] pb-px pl-1 pr-[3px] pt-[3px] shadow-sm">
      {PLOT_MENU.map(([icon, label], i) => (
        <button key={label} className={`flex h-[22px] w-full items-center gap-1 whitespace-nowrap rounded-[3px] border text-[14px] text-[#1a1a1a] ${i === 0 ? "border-[#a9cbe6] bg-gradient-to-b from-[#f4f9fd] to-[#bddcf2]" : "border-transparent"}`}>
          <Icon name={icon} />{label}
        </button>
      ))}
      <Mark className="-left-[7px] -right-[13px] -top-[2px] h-[31px]" />
    </div>
  );
}

function ProjectManager() {
  return (
    <section className="flex w-[164px] shrink-0 flex-col">
      <PanelHead title="项目管理器 (1)" />
      <div className="mt-px h-[145px] shrink-0 border-2 border-[#a7a9b0] bg-white text-[15px] leading-[22px] text-black">
        <button className="flex h-[22px] items-center gap-[5px] pl-[3px]"><Icon name="folder" className="h-[18px] w-5" />UNTITLED</button>
        <div className="flex pl-[13px]">
          <i className="h-[11px] w-[11px] border-b border-l border-dotted border-[#888]" />
          <button className="flex h-[22px] items-center gap-[5px] bg-[#d9d9d9] pl-px pr-[5px]"><Icon name="folder open" className="h-[18px] w-5" />Folder1</button>
        </div>
      </div>
      <div className="relative mt-[2px] flex min-h-0 grow flex-col border-2 border-[#a7a9b0] bg-white">
        <div className="flex grow text-black">
          <div className="w-[101px] border-r border-[#e8ebf4]">
            <div className="flex h-[26px] items-center justify-between pl-[5px] pr-2 text-[14px] text-[#333]">名称<svg viewBox="0 0 8 4" className="h-1 w-2"><path d="M0 4h8L4 0z" fill="#888" /></svg></div>
            <button className="flex h-6 items-center gap-[3px] pl-1 text-[15px]"><Icon name="workbook" className="h-[19px] w-[19px]" />Book1</button>
            <button className="flex h-6 items-center gap-[3px] pl-1 text-[15px] font-bold"><Icon name="graph item" className="h-[19px] w-[19px]" />Graph1</button>
          </div>
          <div className="flex h-[26px] items-center pl-[5px] text-[14px] text-[#333]">长名称</div>
        </div>
        <div className="flex h-5 items-center bg-[#f0f0f0]">
          <button aria-label="向左滚动" className="flex w-[21px] justify-center"><svg viewBox="0 0 6 10" className="h-[10px] w-[6px]" fill="none" stroke="#555" strokeWidth="2"><path d="M5 1L1 5l4 4" /></svg></button>
          <i className="h-full w-[25px] bg-[#cdcdcd]" />
        </div>
        <PlotMenu />
      </div>
    </section>
  );
}

/* ---------- child windows ---------- */
function WindowButtons({ active }) {
  const base = "flex h-6 w-[42px] items-center justify-center rounded-[2px] border";
  const plain = active ? "border-[#6f88ab] bg-gradient-to-b from-[#bdd0e8] via-[#9fb9d8] to-[#b9d1ea]" : "border-[#8b9cb4] bg-[#cad9e8]";
  const svg = { fill: "#fff", stroke: "#596577", strokeWidth: 1.5 };
  return (
    <div className="flex gap-[2px]">
      <button aria-label="最小化窗口" className={`${base} ${plain}`}><svg viewBox="0 0 18 16" className="h-4 w-[18px]" {...svg}><path d="M1 8h16v5H1z" /></svg></button>
      <button aria-label="最大化窗口" className={`${base} ${plain}`}><svg viewBox="0 0 18 16" className="h-4 w-[18px]" {...svg}><path d="M1 1h16v14H1zM6 5h6v6H6z" fillRule="evenodd" /></svg></button>
      <button aria-label="关闭窗口" className={`${base} ${active ? "border-[#5f1a20] bg-gradient-to-b from-[#e3a096] via-[#c04a38] to-[#d0705c]" : plain}`}>
        <svg viewBox="0 0 18 16" className="h-4 w-[18px]" {...svg}><path d="M1 1h5l3 4 3-4h5l-5 7 5 7h-5l-3-4-3 4H1l5-7z" /></svg>
      </button>
    </div>
  );
}

const SHEET = [
  ["长名称", "A", "B", ""], ["单位", "", "", ""], ["注释", "", "", ""], ["F(x)=", "", "", ""],
  ["1", 1, 5, 7], ["2", 2, 3, 2], ["3", 3, 3, 5], ["4", 4, 4, 4], ["5", 5, 9, 7], ["6", 6, 6, 1],
  ["7", "", "", ""], ["8", "", "", ""], ["9", "", "", ""], ["10", "", "", ""], ["11", "", "", ""],
];

const Chevron = ({ d }) => <svg viewBox="0 0 12 12" className="h-3 w-3" fill="none" stroke="#555" strokeWidth="2"><path d={d} /></svg>;

function BookWindow() {
  return (
    <section className="absolute left-[111px] top-[53px] flex h-[404px] w-[496px] flex-col rounded-t-[6px] border-2 border-[#5b6068] bg-gradient-to-b from-[#c0d0de] via-[#d7e4f2] via-10% to-[#d7e4f2] px-[8px] pb-[8px]">
      <div className="flex h-[37px] shrink-0 items-center px-[2px] pt-[2px]">
        <Icon name="workbook" className="h-[19px] w-[19px]" />
        <h2 className="ml-[5px] grow text-[15px] text-[#949ba5]">Book1 *</h2>
        <WindowButtons />
      </div>
      <div className="flex min-h-0 grow flex-col border border-t-2 border-[#848484] bg-[#e0dfe4]">
        <div className="flex min-h-0 grow">
          <div className="relative grow overflow-hidden">
            <table className="w-[360px] table-fixed border-separate border-spacing-0 font-['Liberation_Serif','Noto_Sans_CJK_SC',serif] text-[16px] leading-[16px] text-black">
              <colgroup><col className="w-[108px]" /><col className="w-[84px]" /><col className="w-[84px]" /><col className="w-[84px]" /></colgroup>
              <thead>
                <tr className="h-[29px]">
                  <th className="border-b border-r border-black p-0 pl-[2px] align-top"><span className="flex pt-[2px]"><Icon name="corner" className="h-[18px] w-[18px]" /></span></th>
                  <th className="border-b border-r border-black p-0 text-[14px] font-normal">A(X)</th>
                  <th className="border-b border-r border-black p-0 text-[14px] font-normal">B(Y)</th>
                  <th className="border-b border-r border-black bg-[#b5bcd4] p-0 text-[15px] font-bold">C(Y)</th>
                </tr>
              </thead>
              <tbody>
                {SHEET.map(([head, ...cells], i) => (
                  <tr key={head} className="h-[20px]">
                    <th className={`h-[20px] overflow-hidden whitespace-nowrap border-b border-r border-black p-0 pr-1 text-right align-top ${head === "8" ? "bg-[#b5bcd4] font-bold" : "font-normal"}`}>{head}</th>
                    {cells.map((c, j) => (
                      <td key={j} className={`h-[20px] border-b border-r border-[#c0c0c0] p-0 ${i < 3 ? "bg-[#fbf8c8] text-center align-bottom text-[14px]" : i === 3 ? "bg-[#f7f4b0]" : "bg-white pr-1 text-right align-top"}`}>{c}</td>
                    ))}
                  </tr>
                ))}
              </tbody>
            </table>
            <i className="absolute left-[275px] top-[247px] h-[22px] w-[86px] border-[3px] border-[#111]" />
            <i className="absolute left-[359px] top-[267px] h-1 w-1 bg-[#111]" />
            <Mark className="left-[123px] top-[23px] h-[26px] w-[154px]" />
            <Mark className="left-[107px] top-[107px] h-[122px] w-[87px]" />
          </div>
          <div className="flex w-[21px] shrink-0 flex-col items-center bg-[#f0f0f0]">
            <button aria-label="向上滚动" className="flex h-[21px] items-center"><Chevron d="M1 8l5-5 5 5" /></button>
            <i className="h-[97px] w-[19px] bg-[#cdcdcd]" />
            <span className="grow" />
            <button aria-label="向下滚动" className="flex h-[21px] items-center"><Chevron d="M1 4l5 5 5-5" /></button>
            <i className="h-[5px] w-full border-y border-black bg-[#ddd]" />
          </div>
        </div>
        <div className="flex h-[21px] shrink-0 bg-[#f0f0f0]">
          <button aria-label="上一个工作表" className="flex w-[21px] items-center justify-center border border-[#777] bg-[#f4f4f4]"><svg viewBox="0 0 5 8" className="h-2 w-[5px]" fill="#444"><path d="M5 0v8L0 4z" /></svg></button>
          <button aria-label="下一个工作表" className="flex w-[21px] items-center justify-center border border-[#777] bg-[#f4f4f4]"><svg viewBox="0 0 5 8" className="h-2 w-[5px]" fill="#444"><path d="M0 0v8l5-4z" /></svg></button>
          <div className="flex grow border-r border-black bg-[#cbcbcb]">
            <span className="relative flex w-[88px] items-center justify-center">
              <svg viewBox="0 0 88 21" className="absolute inset-0 h-full w-full" fill="#fff" stroke="#000"><path d="M1 0l7 20.500h72L87 0" /></svg>
              <button className="relative whitespace-nowrap font-['Liberation_Mono',monospace] text-[18px] font-bold leading-none">Sheet1</button>
            </span>
            <i className="grow border-t border-black" />
          </div>
          <div className="ml-1 flex w-[111px] items-center justify-between border-x border-black px-1">
            <Chevron d="M8 1L3 6l5 5" /><i className="h-full w-[67px] bg-[#cdcdcd]" /><Chevron d="M4 1l5 5-5 5" />
          </div>
          <div className="ml-1 flex w-[22px] items-end justify-end border-l border-t border-black p-[3px]">
            <svg viewBox="0 0 11 11" className="h-[11px] w-[11px]" fill="#b4b4b4"><path d="M8 0h3v3H8zM4 4h3v3H4zM8 4h3v3H8zM0 8h3v3H0zM4 8h3v3H4zM8 8h3v3H8z" /></svg>
          </div>
        </div>
      </div>
    </section>
  );
}

const DATA = [[5, 7], [3, 2], [3, 5], [4, 4], [9, 7], [6, 1]];
const yPos = (v) => Math.round(320 - v * 27.5) + 0.5;

function Chart() {
  return (
    <svg viewBox="0 0 500 384" className="h-[384px] w-[500px] shrink-0 bg-white" stroke="#000" fontFamily="Liberation Serif, serif" fontSize="12" role="img" aria-label="柱状图 A B C">
      {DATA.map(([p, q], i) => (
        <g key={i} shapeRendering="crispEdges">
          <rect x={95.5 + i * 57} y={yPos(p)} width="23" height={320.5 - yPos(p)} fill="#fcc797" />
          <rect x={118.5 + i * 57} y={yPos(q)} width="23" height={320.5 - yPos(q)} fill="#9dd79d" />
        </g>
      ))}
      <path d="M90.500 45v276M90 320.500h342" fill="none" shapeRendering="crispEdges" />
      {Array.from({ length: 11 }, (_, v) => (
        <g key={v}>
          <path d={`M${v % 2 ? 87 : 84} ${yPos(v)}H90`} shapeRendering="crispEdges" />
          {v % 2 === 0 && <text x="80" y={yPos(v) + 4} textAnchor="end" stroke="none">{v}</text>}
        </g>
      ))}
      {Array.from({ length: 13 }, (_, k) => <path key={k} d={`M${Math.floor(90 + k * 28.5)}.500 321v${k % 2 ? 4 : 2}`} shapeRendering="crispEdges" />)}
      {DATA.map((_, i) => <text key={i} x={118 + i * 57} y="339" textAnchor="middle" stroke="none">{i + 1}</text>)}
      <text x="260" y="358" textAnchor="middle" stroke="none">A</text>
      <text transform="translate(64 183) rotate(-90)" textAnchor="middle" stroke="none">B</text>
      <g shapeRendering="crispEdges"><rect x="368.500" y="14.500" width="47" height="34" fill="#fff" /><rect x="370.500" y="16.500" width="28" height="14" fill="#fcc797" /><rect x="370.500" y="32.500" width="28" height="14" fill="#9dd79d" /></g>
      <text x="405" y="28" stroke="none">B</text>
      <text x="405" y="44" stroke="none">C</text>
    </svg>
  );
}

function GraphWindow() {
  return (
    <section className="absolute left-[635px] top-[56px] flex h-[435px] w-[634px] flex-col rounded-t-[6px] border-2 border-[#101418] bg-gradient-to-b from-[#99b4d1] via-[#b9d1ea] via-10% to-[#b9d1ea] px-[8px] pb-[8px] shadow-[inset_0_-1px_0_#27b6c9]">
      <div className="flex h-[36px] shrink-0 items-center px-px pt-[2px]">
        <Icon name="graph" className="h-[19px] w-[19px]" />
        <h2 className="ml-[5px] grow text-[15px] text-[#1a1a1a]">Graph1 *</h2>
        <WindowButtons active />
      </div>
      <div className="relative flex min-h-0 grow overflow-hidden border border-t-2 border-[#848484] bg-[#c0c0c0]">
        <Chart />
        <button className="absolute left-0 top-0 h-[25px] w-[25px] bg-[#c0c0c0] font-['Liberation_Sans',sans-serif] text-[17px] font-bold text-black">1</button>
      </div>
    </section>
  );
}

/* ---------- right dock ---------- */
function AppsPanel() {
  return (
    <section className="flex w-[190px] shrink-0 flex-col">
      <PanelHead title="Apps" />
      <div className="mt-px flex min-h-0 grow bg-[#f0f0f0]">
        <div className="relative w-[30px] shrink-0 border-r border-[#a0a0a0]">
          <svg viewBox="0 0 30 320" className="absolute inset-0 h-[320px] w-[30px]" fill="none" stroke="#777">
            <path d="M30 68L4.500 81v29l25.500 13" fill="#fff" stroke="none" />
            <path d="M29.500 68L4.500 81v29l25 13M4.500 124l12-7M4.500 124v47l25 12M4.500 184l12-7M4.500 184v122l25 13" />
            <path d="M11 6h9v1h-9zM12 11h8l-4-4zM12 27h8l-4-4zM12 40h8l-4 4zM12 55h8l-4 4zM11 60h9v1h-9z" fill="#000" stroke="none" />
          </svg>
          <div className="relative flex flex-col pl-[6px] pt-[82px] text-[15px] leading-[22px] text-[#222]">
            <button className="h-[43px] text-left font-bold text-black [text-orientation:sideways] [writing-mode:vertical-rl]">所有</button>
            <button className="h-[58px] text-left [writing-mode:vertical-rl]">Fitting</button>
            <button className="text-left [writing-mode:vertical-rl]">Batch Processing</button>
          </div>
        </div>
        <div className="grow border-r-2 border-t-2 border-[#a0a0a0] bg-white pt-[3px]">
          <button className="ml-[15px] flex w-[62px] flex-col items-center text-[15px] leading-[22px] text-black">
            <svg viewBox="0 0 40 40" className="mb-[2px] h-10 w-10">
              <path d="M1 1h34v33H1z" fill="#fff" stroke="#3c9dd8" strokeWidth="2" /><path d="M0 0h36v5H0z" fill="#1080c8" />
              <path d="M4 7h11v15H4z" fill="#c8c8c8" /><path d="M19 8h4M27 7h6v4h-6zM3 26h4M10 25h6v3h-6zM3 30h4M10 30h6v3h-6zM19 13h14v10" fill="none" stroke="#ccc" />
              <circle cx="28" cy="28" r="12" fill="#e53935" /><path d="M21 28h14M28 21v14" stroke="#fff" strokeWidth="5" />
            </svg>
            添加App
          </button>
        </div>
      </div>
    </section>
  );
}

/* ---------- bottom ---------- */
function ImeBar() {
  const blue = "#0b76d8";
  return (
    <div className="absolute bottom-0 right-0 z-30 flex h-8 w-[260px] items-center border border-[#b9d2ea] bg-white pl-[18px]">
      <svg viewBox="0 0 40 40" className="absolute -left-[22px] -top-[6px] h-[39px] w-10">
        <path d="M6 5Q5 4 6 4L32 0q2 0 3 3l4 26q0 3-4 4L11 39q-4 0-5-4L1 10q0-4 5-5z" fill="#f4622a" />
        <path d="M32 8C18 5 8 9 9 15s22 3 23 9c0 6-14 7-22 5" fill="none" stroke="#fff" strokeWidth="5" />
      </svg>
      {[
        <path d="M3 20L11 2l8 18M6 14h10" fill="none" stroke={blue} strokeWidth="3" />,
        <path d="M2 6h5v5H2zM12 13h5v4l-3 4-1-1 1-3h-2z" fill={blue} />,
        <g><circle cx="11" cy="11" r="10" fill={blue} /><path d="M6 6h3v4H6zM13 6h3v4h-3zM5 13h12c-2 6-10 6-12 0z" fill="#fff" /></g>,
        <g fill={blue}><rect x="7" y="0" width="8" height="13" rx="4" /><path d="M3 9c0 12 16 12 16 0M11 18v3M7 21h8" fill="none" stroke={blue} strokeWidth="2" /></g>,
        <g><rect x="1" y="3" width="20" height="17" fill={blue} /><path d="M4 7.500h15M4 11.500h15" stroke="#fff" strokeWidth="2" strokeDasharray="2 1.500" /><path d="M7 15.500h9" stroke="#fff" strokeWidth="2" /></g>,
        <g fill="#c9cdd2"><circle cx="11" cy="6" r="5" /><path d="M2 21c0-10 18-10 18 0z" /></g>,
        <path d="M7 1c2 3 6 3 8 0l6 3-2 6-3-1v12H6V9l-3 1-2-6z" fill={blue} />,
        <g fill={blue}><rect x="2" y="2" width="8" height="8" rx="2" /><rect x="2" y="12" width="8" height="8" rx="2" /><rect x="12" y="12" width="8" height="8" rx="2" /><circle cx="16" cy="6" r="4.500" /></g>,
      ].map((shape, i) => (
        <button key={i} aria-label={`输入法 ${i + 1}`} className="flex w-[30px] shrink-0 justify-center"><svg viewBox="0 0 22 22" className="h-5 w-5">{shape}</svg></button>
      ))}
      <span className="pointer-events-none absolute -left-[10px] bottom-0 whitespace-nowrap text-[14px] leading-[16px] text-[#b9c0c8] opacity-60">https://blog.csdn.net/weixin_45653050</span>
    </div>
  );
}

function StatusBar() {
  return (
    <footer className="relative flex h-[25px] shrink-0 items-center border-t border-[#dcdce4] bg-[#f0f0f0] text-[14px] text-[#222]">
      <span className="grow pl-1">绘制所选数据的(垂直)柱状图</span>
      <span className="flex h-full items-center whitespace-nowrap text-[13px]">
        <span className="flex h-full items-center border-r border-[#d0d0d0] pr-1">--</span>
        <span className="h-full w-[10px] border-r border-[#d0d0d0]" />
        <span className="flex h-full w-[50px] items-center border-r border-[#d0d0d0] pl-[5px]">AU : 开</span>
        <span className="flex h-full w-[73px] items-center border-r border-[#d0d0d0] pl-1">Light Grids</span>
        <span className="w-[309px] pl-1">1:[Bo</span>
      </span>
      <ImeBar />
    </footer>
  );
}

export default function App() {
  return (
    <div className="flex h-screen w-full flex-col overflow-hidden bg-gradient-to-r from-[#eaecfb] to-[#f2f5fd] font-['Open_Sans','Noto_Sans_CJK_SC',sans-serif]">
      <TitleBar />
      <MenuBar />
      <div className="flex h-[29px] shrink-0">{ROW1.map((g, i) => <Bar key={i} items={g} />)}</div>
      <div className="flex h-[29px] shrink-0">{ROW2.map((g, i) => <Bar key={i} items={g} />)}</div>

      <div className="flex min-h-0 grow">
        <div className="flex w-[25px] shrink-0 flex-col gap-[14px] bg-[#eaecfb] pr-[2px] pt-1">
          <SideTab className="h-[88px] border-b-2 border-r-2 pt-[3px]">快速帮助</SideTab>
          <SideTab className="h-[88px] border-b-2 border-r-2 pt-[3px]">消息日志</SideTab>
          <SideTab className="h-[120px] border-b-2 border-r-2 pt-[3px]">提示日志 (1)</SideTab>
        </div>
        <div className="w-9 shrink-0"><Column items={LEFT1} wide /><Column items={LEFT2} /></div>

        <main className="flex min-w-0 grow flex-col">
          <div className="flex min-h-0 grow gap-1">
            <ProjectManager />
            <div className="relative min-w-0 grow overflow-hidden border-l-2 border-t-2 border-[#767676] bg-[#ababab]">
              <BookWindow />
              <GraphWindow />
            </div>
          </div>
          <div className="flex h-[31px] shrink-0 items-start bg-[#eff1fc] pl-px pt-px">
            <Bar items={PLOTS}><Mark className="-bottom-[1px] -top-[1px] left-[12px] right-[12px]" /></Bar>
            {BOTTOM.map((g, i) => <Bar key={i} items={g} />)}
          </div>
        </main>

        <div className="w-10 shrink-0"><Column items={RIGHT1} wide /><Column items={RIGHT2} /></div>
        <AppsPanel />
        <div className="w-[25px] shrink-0 bg-[#eaecfb] pl-[2px] pt-1">
          <SideTab className="h-[103px] w-full border-b-2 border-l-2 pt-[3px]">对象管理器</SideTab>
        </div>
      </div>

      <StatusBar />
      <div className="flex h-[9px] shrink-0 bg-[#191919]"><i className="ml-[55%] h-full w-[45px] bg-[#4c4c4c]" /></div>
    </div>
  );
}
